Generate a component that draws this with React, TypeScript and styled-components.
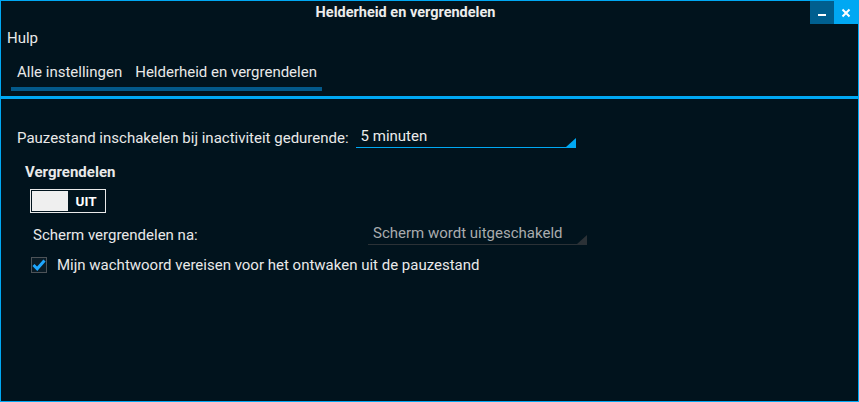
import styled, { createGlobalStyle } from 'styled-components';

const GlobalStyle = createGlobalStyle`
  html, body {
    margin: 0;
    padding: 0;
    background: #01131d;
  }
  body {
    font-family: Roboto, 'Noto Sans', sans-serif;
    color: #e9e9e9;
  }
`;

const Window = styled.div`
  box-sizing: border-box;
  width: 859px;
  height: 402px;
  border: 1px solid #00a8f3;
  background: #01131d;
  display: flex;
  flex-direction: column;
  overflow: hidden;
`;

const TitleBar = styled.div`
  height: 23px;
  display: flex;
  align-items: center;
`;

const Title = styled.div`
  flex: 1;
  text-align: center;
  font-size: 14.5px;
  font-weight: 700;
  color: #ececec;
`;

const WinButtons = styled.div`
  display: flex;
  align-self: stretch;
`;

const WinButton = styled.div<{ $bg: string }>`
  width: 24px;
  height: 23px;
  background: ${(p) => p.$bg};
  display: flex;
  align-items: center;
  justify-content: center;
`;

const MenuBar = styled.div`
  box-sizing: border-box;
  font-size: 15px;
  padding: 5px 0 0 6px;
  height: 26px;
  line-height: 18px;
`;

const TabRow = styled.div`
  display: flex;
  padding: 13px 0 0 10px;
  height: 46px;
  box-sizing: border-box;
`;

const Crumbs = styled.div`
  display: flex;
  flex-direction: column;
`;

const CrumbTexts = styled.div`
  display: flex;
  gap: 13px;
  font-size: 15px;
  line-height: 18px;
  padding-left: 6px;
  height: 24px;
`;

const CrumbLine = styled.div`
  height: 4px;
  width: 311px;
  background: #03598a;
`;

const Separator = styled.div`
  height: 3px;
  background: #00a8f3;
`;

const Content = styled.div`
  padding: 28px 0 0 16px;
  display: flex;
  flex-direction: column;
  font-size: 15px;
  line-height: 18px;
`;

const Row = styled.div<{ $indent?: number; $gap?: number }>`
  display: flex;
  align-items: center;
  padding-left: ${(p) => p.$indent || 0}px;
  margin-top: ${(p) => p.$gap || 0}px;
`;

const Label = styled.span<{ $width?: number }>`
  box-sizing: border-box;
  ${(p) => (p.$width ? `width: ${p.$width}px;` : '')}
  padding-right: 7px;
`;

const Combo = styled.div<{ $width: number; $muted?: boolean }>`
  position: relative;
  width: ${(p) => p.$width}px;
  height: 21px;
  box-sizing: border-box;
  border-bottom: 1px solid ${(p) => (p.$muted ? '#2b3136' : '#00a8f3')};
  color: ${(p) => (p.$muted ? '#a9acae' : '#ececec')};
  padding-left: 5px;
  line-height: 18px;
  &::after {
    content: '';
    position: absolute;
    right: 0;
    bottom: 0;
    width: 0;
    height: 0;
    border-left: 10px solid transparent;
    border-bottom: 9px solid ${(p) => (p.$muted ? '#2b3136' : '#00a8f3')};
  }
`;

const SectionTitle = styled.div`
  font-weight: 700;
  padding: 15px 0 0 8px;
  height: 18px;
`;

const Toggle = styled.div`
  margin: 8px 0 0 13px;
  width: 76px;
  height: 24px;
  box-sizing: border-box;
  border: 1px solid #e9e9e9;
  display: flex;
  padding: 1px;
`;

const ToggleKnob = styled.div`
  width: 36px;
  background: #efefef;
`;

const ToggleText = styled.div`
  flex: 1;
  display: flex;
  align-items: center;
  justify-content: center;
  font-size: 13.5px;
  font-weight: 700;
  color: #ffffff;
`;

const CheckBox = styled.div`
  width: 16px;
  height: 16px;
  box-sizing: border-box;
  border: 1px solid #4d5358;
  background: #0b1c26;
  display: flex;
  align-items: center;
  justify-content: center;
  margin-right: 10px;
`;

export default function App() {
  return (
    <>
      <GlobalStyle />
      <Window>
        <TitleBar>
          <Title>Helderheid en vergrendelen</Title>
          <WinButtons>
            <WinButton $bg="#005f8f">
              <svg width="10" height="10" viewBox="0 0 10 10">
                <rect x="1" y="6" width="8" height="2" fill="#ffffff" />
              </svg>
            </WinButton>
            <WinButton $bg="#00a8f3">
              <svg width="10" height="10" viewBox="0 0 10 10">
                <path d="M1.5 1.5 L8.5 8.5 M8.5 1.5 L1.5 8.5" stroke="#ffffff" strokeWidth="2" />
              </svg>
            </WinButton>
          </WinButtons>
        </TitleBar>
        <MenuBar>Hulp</MenuBar>
        <TabRow>
          <Crumbs>
            <CrumbTexts>
              <span>Alle instellingen</span>
              <span>Helderheid en vergrendelen</span>
            </CrumbTexts>
            <CrumbLine />
          </Crumbs>
        </TabRow>
        <Separator />
        <Content>
          <Row>
            <Label>Pauzestand inschakelen bij inactiviteit gedurende:</Label>
            <Combo $width={220}>5 minuten</Combo>
          </Row>
          <SectionTitle>Vergrendelen</SectionTitle>
          <Toggle>
            <ToggleKnob />
            <ToggleText>UIT</ToggleText>
          </Toggle>
          <Row $indent={16} $gap={11}>
            <Label $width={335}>Scherm vergrendelen na:</Label>
            <Combo $width={219} $muted>Scherm wordt uitgeschakeld</Combo>
          </Row>
          <Row $indent={14} $gap={11}>
            <CheckBox>
              <svg width="14" height="12" viewBox="0 0 14 12">
                <path d="M1.5 6 L5.2 9.7 L12.5 1.5" stroke="#1ea7ff" strokeWidth="3" fill="none" />
              </svg>
            </CheckBox>
            <span>Mijn wachtwoord vereisen voor het ontwaken uit de pauzestand</span>
          </Row>
        </Content>
      </Window>
    </>
  );
}
